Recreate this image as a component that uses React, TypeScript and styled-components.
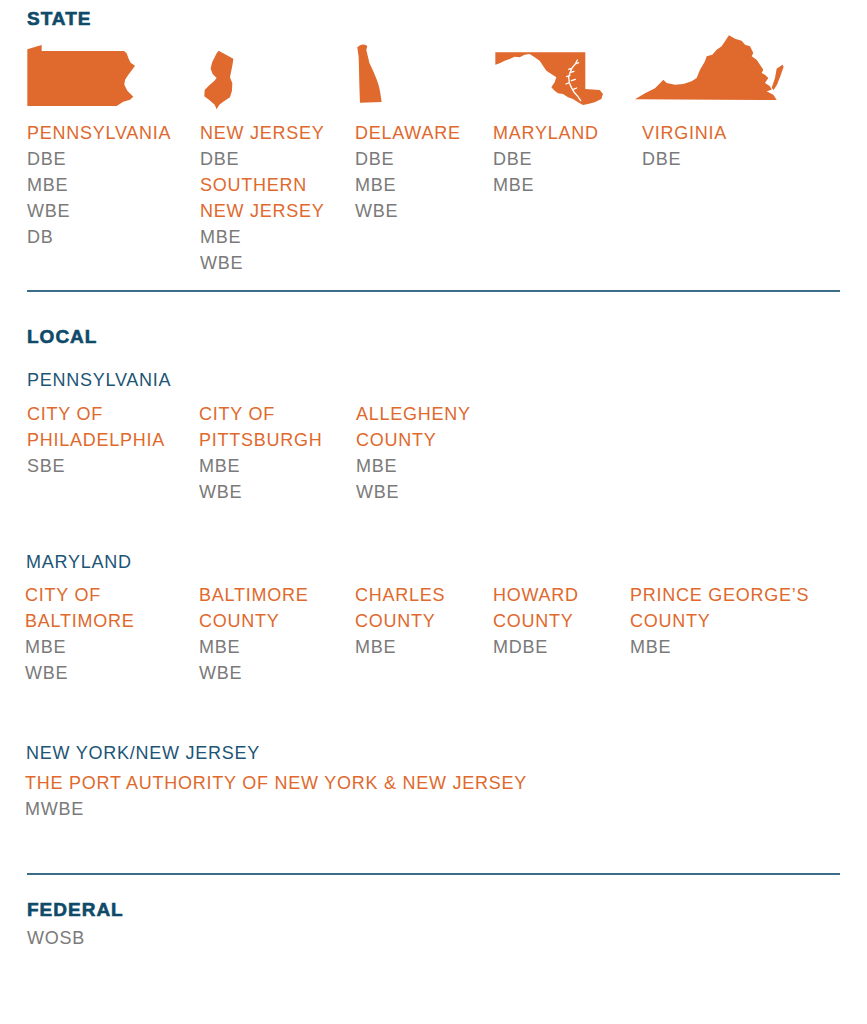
import React from 'react';
import styled, { createGlobalStyle } from 'styled-components';

const ORANGE = '#e0692d';
const GRAY = '#7a7a7a';
const BLUE = '#1c5576';
const NAVY = '#0f4a69';

const GlobalStyle = createGlobalStyle`
  html, body {
    margin: 0;
    padding: 0;
    background: #ffffff;
  }
  body {
    font-family: 'Liberation Sans', Arial, sans-serif;
    -webkit-font-smoothing: antialiased;
  }
`;

type Tone = 'orange' | 'gray';
type Entry = [string, Tone];

interface Column {
  lines: Entry[];
  shape?: React.ReactNode;
}

// state outlines, traced from the artwork (coords are 3x crops, scaled back down)
const Pennsylvania = () => (
  <ShapeSvg width={130} height={78} viewBox="27 32 130 78">
    <g transform="scale(0.3333)">
      <path d="M82 148 L125 135 L125 153 L372 153 L380 160 L386 176 L392 188 L405 197 L396 210 L384 226 L375 240 L373 254 L382 272 L400 290 L390 299 L370 305 L350 318 L82 318 Z" />
    </g>
  </ShapeSvg>
);

const NewJersey = () => (
  <ShapeSvg width={130} height={78} viewBox="200 32 130 78">
    <g transform="scale(0.3333)">
      <path d="M656 152 L700 176 L698 192 L694 212 L690 232 L697 250 L696 272 L690 292 L672 304 L658 314 L650 328 L644 314 L628 300 L613 289 L614 270 L628 256 L642 244 L650 234 L638 222 L632 206 L636 188 L644 172 L650 160 Z" />
    </g>
  </ShapeSvg>
);

const Delaware = () => (
  <ShapeSvg width={130} height={78} viewBox="355 32 130 78">
    <g transform="scale(0.3333)">
      <path d="M1072 142 Q1086 128 1102 138 L1099 150 L1104 170 L1108 188 L1120 214 L1130 238 L1136 256 L1140 272 L1145 306 L1080 308 L1078 250 L1077 200 L1076 170 Z" />
    </g>
  </ShapeSvg>
);

const Maryland = () => (
  <ShapeSvg width={130} height={78} viewBox="493 32 130 78">
    <g transform="translate(488 44) scale(0.3333)">
      <path d="M22 25 L292 25 L292 135 L335 138 L345 150 L340 165 L320 175 L300 180 L285 183 L270 175 L255 165 L240 160 L225 150 L210 148 L200 140 L190 130 L200 115 L205 100 L190 90 L175 80 L165 65 L155 50 L140 40 L125 30 L110 32 L95 40 L80 38 L65 45 L50 50 L35 58 L22 62 Z" />
      <path
        d="M268 48 L262 60 L252 72 L246 86 L242 100 L244 116 L250 130 L258 144 L270 158 L278 170 M252 72 L242 76 M246 94 L236 98 M244 116 L234 120 M262 60 L272 56 M246 86 L258 82 M250 110 L262 106 M256 136 L266 132"
        fill="none"
        stroke="#ffffff"
        strokeWidth={4}
        strokeLinecap="round"
      />
    </g>
  </ShapeSvg>
);

const Virginia = () => (
  <ShapeSvg width={150} height={78} viewBox="642 32 150 78">
    <g transform="translate(625 28) scale(0.3333)">
      <path d="M30 214 L60 196 L90 181 L105 166 L115 155 L125 165 L150 170 L175 168 L200 160 L215 150 L225 125 L240 100 L245 85 L262 80 L275 65 L290 55 L300 40 L312 22 L330 32 L350 38 L360 50 L375 55 L385 75 L380 85 L395 95 L405 110 L415 125 L410 135 L420 140 L430 150 L420 165 L435 175 L440 185 L425 190 L445 200 L455 216 Z" />
      <path d="M455 122 L472 110 L476 116 L466 145 L456 170 L446 186 L440 180 L450 150 Z" />
    </g>
  </ShapeSvg>
);

const stateCols: Column[] = [
  {
    shape: <Pennsylvania />,
    lines: [
      ['PENNSYLVANIA', 'orange'],
      ['DBE', 'gray'],
      ['MBE', 'gray'],
      ['WBE', 'gray'],
      ['DB', 'gray'],
    ],
  },
  {
    shape: <NewJersey />,
    lines: [
      ['NEW JERSEY', 'orange'],
      ['DBE', 'gray'],
      ['SOUTHERN', 'orange'],
      ['NEW JERSEY', 'orange'],
      ['MBE', 'gray'],
      ['WBE', 'gray'],
    ],
  },
  {
    shape: <Delaware />,
    lines: [
      ['DELAWARE', 'orange'],
      ['DBE', 'gray'],
      ['MBE', 'gray'],
      ['WBE', 'gray'],
    ],
  },
  {
    shape: <Maryland />,
    lines: [
      ['MARYLAND', 'orange'],
      ['DBE', 'gray'],
      ['MBE', 'gray'],
    ],
  },
  {
    shape: <Virginia />,
    lines: [
      ['VIRGINIA', 'orange'],
      ['DBE', 'gray'],
    ],
  },
];

const paCols: Column[] = [
  {
    lines: [
      ['CITY OF', 'orange'],
      ['PHILADELPHIA', 'orange'],
      ['SBE', 'gray'],
    ],
  },
  {
    lines: [
      ['CITY OF', 'orange'],
      ['PITTSBURGH', 'orange'],
      ['MBE', 'gray'],
      ['WBE', 'gray'],
    ],
  },
  {
    lines: [
      ['ALLEGHENY', 'orange'],
      ['COUNTY', 'orange'],
      ['MBE', 'gray'],
      ['WBE', 'gray'],
    ],
  },
];

const mdCols: Column[] = [
  {
    lines: [
      ['CITY OF', 'orange'],
      ['BALTIMORE', 'orange'],
      ['MBE', 'gray'],
      ['WBE', 'gray'],
    ],
  },
  {
    lines: [
      ['BALTIMORE', 'orange'],
      ['COUNTY', 'orange'],
      ['MBE', 'gray'],
      ['WBE', 'gray'],
    ],
  },
  {
    lines: [
      ['CHARLES', 'orange'],
      ['COUNTY', 'orange'],
      ['MBE', 'gray'],
    ],
  },
  {
    lines: [
      ['HOWARD', 'orange'],
      ['COUNTY', 'orange'],
      ['MDBE', 'gray'],
    ],
  },
  {
    lines: [
      ['PRINCE GEORGE\u2019S', 'orange'],
      ['COUNTY', 'orange'],
      ['MBE', 'gray'],
    ],
  },
];

const ColumnGroup = ({
  cols,
  template,
  top,
  left = 0,
}: {
  cols: Column[];
  template: string;
  top: number;
  left?: number;
}) => (
  <Columns $cols={template} $top={top} $left={left}>
    {cols.map((col, i) => (
      <Col key={i}>
        {col.shape && <ShapeBox>{col.shape}</ShapeBox>}
        {col.lines.map(([text, tone], j) => (
          <Line key={j} $tone={tone}>
            {text}
          </Line>
        ))}
      </Col>
    ))}
  </Columns>
);

const App = () => {
  return (
    <>
      <GlobalStyle />
      <Page>
        <SectionTitle $top={0}>STATE</SectionTitle>
        <ColumnGroup
          cols={stateCols}
          template="173px 155px 138px 149px 1fr"
          top={2}
        />
        <Divider $top={14} />

        <SectionTitle $top={34}>LOCAL</SectionTitle>
        <Subhead $top={19}>PENNSYLVANIA</Subhead>
        <ColumnGroup cols={paCols} template="172px 157px 1fr" top={8} />

        <Subhead $top={44} $left={-1}>
          MARYLAND
        </Subhead>
        <ColumnGroup
          cols={mdCols}
          template="174px 156px 138px 137px 1fr"
          top={7}
          left={-2}
        />

        <Subhead $top={54} $left={-1}>
          NEW YORK/NEW JERSEY
        </Subhead>
        <Line $tone="orange" $top={4} $left={-2}>
          THE PORT AUTHORITY OF NEW YORK &amp; NEW JERSEY
        </Line>
        <Line $tone="gray" $left={-2}>
          MWBE
        </Line>
        <Divider $top={51} />

        <SectionTitle $top={24}>FEDERAL</SectionTitle>
        <Line $tone="gray" $top={4}>
          WOSB
        </Line>
      </Page>
    </>
  );
};

export default App;

const Page = styled.div`
  width: 867px;
  min-height: 1024px;
  box-sizing: border-box;
  padding: 8px 27px 0;
  display: flex;
  flex-direction: column;
  background: #ffffff;
`;

const SectionTitle = styled.div<{ $top: number }>`
  margin-top: ${(p) => p.$top}px;
  font-size: 19px;
  line-height: 22px;
  font-weight: 700;
  letter-spacing: 1px;
  color: ${NAVY};
  -webkit-text-stroke: 0.6px ${NAVY};
`;

const Subhead = styled.div<{ $top: number; $left?: number }>`
  margin-top: ${(p) => p.$top}px;
  margin-left: ${(p) => p.$left ?? 0}px;
  font-size: 18px;
  line-height: 26px;
  letter-spacing: 0.75px;
  color: ${BLUE};
`;

const Divider = styled.hr<{ $top: number }>`
  margin: ${(p) => p.$top}px 0 0;
  width: 100%;
  height: 0;
  border: none;
  border-top: 2px solid #3b6d89;
`;

const Columns = styled.div<{ $cols: string; $top: number; $left: number }>`
  display: grid;
  grid-template-columns: ${(p) => p.$cols};
  margin-top: ${(p) => p.$top}px;
  margin-left: ${(p) => p.$left}px;
  align-items: start;
`;

const Col = styled.div`
  display: flex;
  flex-direction: column;
`;

const ShapeBox = styled.div`
  height: 78px;
  margin-bottom: 10px;
`;

const ShapeSvg = styled.svg`
  display: block;
  overflow: visible;
  fill: ${ORANGE};
`;

const Line = styled.div<{ $tone: Tone; $top?: number; $left?: number }>`
  margin-top: ${(p) => p.$top ?? 0}px;
  margin-left: ${(p) => p.$left ?? 0}px;
  font-size: 18px;
  line-height: 26px;
  letter-spacing: 0.75px;
  white-space: nowrap;
  color: ${(p) => (p.$tone === 'orange' ? ORANGE : GRAY)};
`;
